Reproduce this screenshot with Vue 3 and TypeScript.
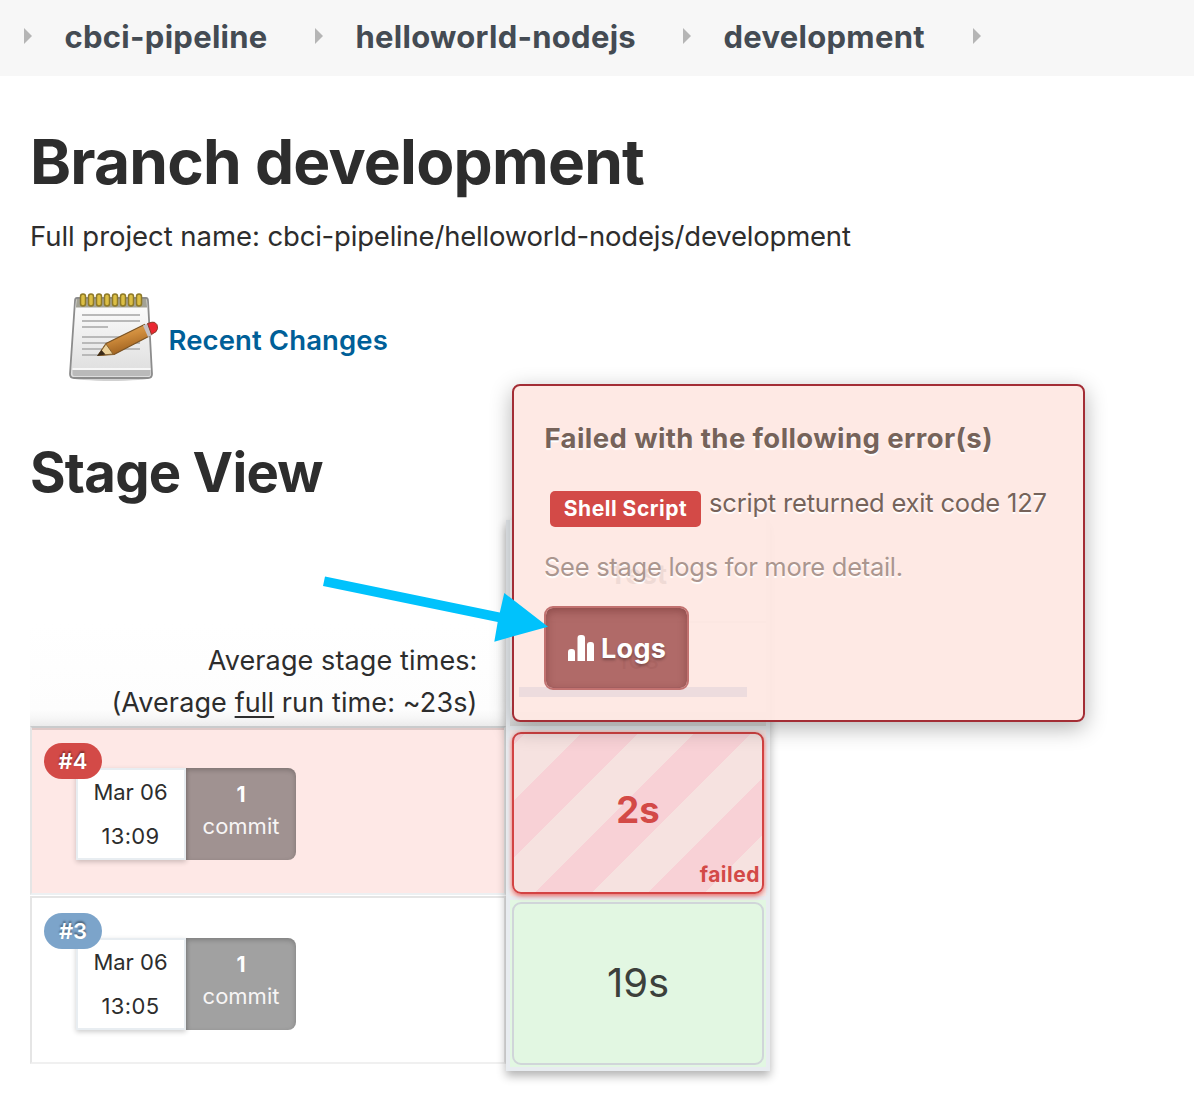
<script setup lang="ts">
interface Crumb { label: string; width: number }
interface Build { id: string; time: string; failed: boolean }

const crumbs: Crumb[] = [
  { label: 'cbci-pipeline', width: 291 },
  { label: 'helloworld-nodejs', width: 368 },
  { label: 'development', width: 290 },
]
const builds: Build[] = [
  { id: '#4', time: '13:09', failed: true },
  { id: '#3', time: '13:05', failed: false },
]
const rings = [80, 88, 96, 104, 112, 120, 128, 136]
</script>

<template>
  <div class="page">
    <nav class="crumbs">
      <i class="sep"></i>
      <div v-for="c in crumbs" :key="c.label" class="crumb" :style="{ width: c.width + 'px' }">
        <span>{{ c.label }}</span><i class="sep"></i>
      </div>
    </nav>
    <main>
      <h1>Branch development</h1>
      <p class="full"><span>Full project name: </span>cbci-pipeline/helloworld-nodejs/development</p>
      <a class="recent">
        <svg width="98" height="96" viewBox="64 290 98 96">
          <defs>
            <linearGradient id="paper" x1="0" y1="0" x2="0" y2="1"><stop offset="0" stop-color="#fff" /><stop offset="1" stop-color="#dcdcdc" /></linearGradient>
            <linearGradient id="wood" x1="0" y1="0" x2="0.4" y2="1"><stop offset="0" stop-color="#e6b062" /><stop offset=".5" stop-color="#cf8c3c" /><stop offset="1" stop-color="#9c5f1e" /></linearGradient>
          </defs>
          <ellipse cx="111" cy="378" rx="38" ry="3" fill="#000" opacity=".18" />
          <path d="M77 298h69q2 0 2 3l4 73q0 4-4 4H74q-4 0-4-4l5-73q0-3 2-3z" fill="url(#paper)" stroke="#8c8c8c" stroke-width="1.800" />
          <path d="M76.500 299h70l.5 8.500H76z" fill="#a3a295" />
          <path d="M72.500 370h78v4q0 2-2 2H74.500q-2 0-2-2z" fill="#bababa" />
          <path d="M72.500 369h78" stroke="#fff" stroke-width="1.500" />
          <path d="M82 315h58M82 321h58M82 327h26M82 337h58M82 343h58M82 349h58M82 355h22" stroke="#b9b9b9" stroke-width="1.900" />
          <rect v-for="x in rings" :key="x" :x="x + 0.5" y="294" width="5" height="12" rx="2.500" fill="#dcbf45" stroke="#8f7a28" stroke-width="1.500" />
          <path d="M98 355.500L106 343.500 144.500 324.500 149.500 336 114 354.500z" fill="url(#wood)" stroke="#7a5222" stroke-width="1.200" stroke-linejoin="round" />
          <path d="M98 355.500L106 344 113 354z" fill="#ecd29c" stroke="#8a6430" />
          <path d="M97 356l4.500-6 4 4.500z" fill="#3a2a18" />
          <path d="M143 325.500l4.500-2 5 11.500-4.500 2z" fill="#c4c0c4" />
          <path d="M147.500 323.500l4.500-1.300q3-.8 5 2.500 1.600 4-1 7l-4.500 2.700z" fill="#ea2832" stroke="#8c3a28" />
        </svg>
        <span>Recent Changes</span>
      </a>
      <h2>Stage View</h2>
      <section class="stages">
        <div class="left">
          <div class="avg"><div>Average stage times:</div><div class="second">(Average <u>full</u> run time: ~23s)</div></div>
          <div v-for="b in builds" :key="b.id" class="run" :class="{ failed: b.failed }">
            <div class="card">
              <span class="pill">{{ b.id }}</span>
              <div class="date"><span>Mar 06</span><span class="time">{{ b.time }}</span></div>
              <div class="commit"><b>1</b><span>commit</span></div>
            </div>
          </div>
        </div>
        <div class="column">
          <div class="colhead"><b>Test</b><div class="mean">10s</div><i class="bar"></i></div>
          <div class="cell bad"><div class="box"><span>2s</span><em>failed</em></div></div>
          <div class="cell good"><div class="box"><span>19s</span></div></div>
        </div>
        <aside class="popup">
          <h3>Failed with the following error(s)</h3>
          <div class="err"><span class="tag">Shell Script</span><span class="msg">script returned exit code 127</span></div>
          <p class="see">See stage logs for more detail.</p>
          <button class="logs">
            <svg width="26" height="26" viewBox="0 0 26 26" fill="#fff"><path d="M0 26V17q0-3 3-3h1q3 0 3 3v9zM9.500 26V3q0-3 3-3h1.500q3 0 3 3v23zM19 26V10q0-3 3-3h1q3 0 3 3v16z" /></svg>
            <span>Logs</span>
          </button>
        </aside>
        <svg class="arrow" width="226" height="50" viewBox="322 592 226 50"><path d="M325 576.500L499.800 612.500 504.300 593 548 626.700 494.300 641.700 497.700 622 323 586z" fill="#00c2fc" /></svg>
      </section>
    </main>
  </div>
</template>

<style>
body { margin: 0; background: #fff; }
</style>
<style scoped>
* { box-sizing: border-box; }
.page { width: 1194px; height: 1104px; overflow: hidden; position: relative; font-family: Inter, "Liberation Sans", sans-serif; color: #2d2d2d; }
.crumbs { height: 76px; padding: 0 0 3px 24px; background: #f7f7f7; display: flex; align-items: center; color: #444b53; font-size: 31px; font-weight: 700; letter-spacing: .280px; }
.crumb { display: flex; align-items: center; justify-content: space-between; padding-left: 32.500px; }
.sep { width: 0; height: 0; border: 8px solid transparent; border-left-color: #b5b5b5; border-right: 0; flex: none; margin-bottom: 1px; }
main { padding: 48px 30px 0; }
h1, h2, h3, p { margin: 0; }
h1 { font-size: 62.200px; line-height: 76px; letter-spacing: -.790px; }
.full { font-size: 27.500px; line-height: 42px; margin-top: 15px; white-space: pre; letter-spacing: -.200px; }
.full span { letter-spacing: -.050px; }
.recent { display: flex; height: 96px; margin: 33px 0 0 34px; align-items: center; color: #005f98; font-size: 27.500px; font-weight: 600; letter-spacing: .110px; }
.recent span { padding: 4px 0 0 6.500px; }
h2 { font-size: 54.400px; line-height: 60px; margin-top: 56px; letter-spacing: -.740px; }
.stages { position: relative; display: flex; margin-top: 18px; width: 740px; height: 551px; }
.left { width: 476px; }
.avg { height: 206px; padding: 120px 28.500px 0 0; text-align: right; font-size: 27px; line-height: 42px; letter-spacing: .110px; background: linear-gradient(#fff 50%, #fdfdfd 92%, #f7f7f7 96%, #ebebeb); }
u { text-underline-offset: 4px; text-decoration-thickness: 2px; }
.run { height: 168px; border: 2px solid #e5e5e5; border-bottom-color: #f0f0f0; padding: 40px 0 0 44px; }
.run.failed { background: linear-gradient(#dfc9c7 2px, #fee8e6 2px); border-top-color: #c9cbcc; height: 169px; margin-bottom: 1px; border-bottom-color: #edf0f2; }
.card { position: relative; display: flex; width: 220px; height: 92px; font-size: 22px; }
.date { width: 110px; border: 2px solid #e8edf1; background: #fff; box-shadow: 0 2px 5px rgba(0,0,0,.2); text-align: center; line-height: 44px; }
.date span { display: block; margin-left: -1px; }
.date .time { letter-spacing: .350px; }
.commit { width: 110px; background: rgba(0,0,0,.37); border-radius: 0 8px 8px 0; color: #fff; text-align: center; display: flex; flex-direction: column; line-height: 32px; padding-top: 10px; box-shadow: inset 0 2px 5px rgba(0,0,0,.22); }
.commit b { font-size: 21px; padding-top: 1px; margin-bottom: -1px; }
.commit span { color: #f7f5f5; }
.pill { position: absolute; left: -32px; top: -25px; width: 58px; height: 36px; border-radius: 18px; background: #7ca4ca; color: #fff; font-weight: 600; line-height: 36px; text-align: center; text-shadow: 0 -2px 2px rgba(0,0,0,.4); }
.failed .pill { background: #d34a47; }
.column { width: 264px; border: solid #e8ecf0; border-width: 0 4px 4px; box-shadow: 0 5px 9px rgba(0,0,0,.3); background: #e8ecf0; }
.colhead { height: 206px; background: linear-gradient(#fff, #fff 90%, #d8d8d8); text-align: center; padding-top: 33px; font-size: 27.500px; line-height: 42px; }
.mean { border-top: 2px solid #ddd; margin-top: 26px; padding-top: 16px; font-size: 27px; }
.bar { display: block; height: 10px; width: 228px; background: #104ba8; margin: 6px 0 0 9px; }
.cell { height: 166px; margin-top: 4px; padding: 2px; background: #f6e9e7; }
.cell.good { height: 167px; background: #e2f7e2; }
.box { position: relative; height: 100%; border: 2px solid #d0d5d9; border-radius: 9px; display: flex; align-items: center; justify-content: center; font-size: 40px; color: #3c403b; }
.box span { padding-bottom: 3px; }
.bad .box span { padding-bottom: 7px; }
.bad .box { border-color: #d34343; color: #d34a47; font-size: 36.500px; font-weight: 700; background: repeating-linear-gradient(-45deg, #f6e2e0 0 40px, #f8d1d6 40px 80px); box-shadow: 0 2px 5px rgba(220,50,50,.7); }
.box em { position: absolute; right: 2px; bottom: 3px; font-style: normal; font-size: 21px; line-height: 28px; letter-spacing: .500px; }
.popup { position: absolute; left: 482px; top: -136px; width: 573px; height: 338px; border: 2px solid #a32d35; border-radius: 8px; background: rgba(254,231,226,.93); box-shadow: 0 6px 22px rgba(0,0,0,.3); padding: 31px 30px; color: #76635a; text-shadow: 0 2px 1px #fff; }
h3 { font-size: 27.500px; line-height: 42px; white-space: nowrap; letter-spacing: .410px; margin-left: .500px; }
.err { display: flex; height: 36px; margin: 32px 0 0 6px; font-size: 25.500px; white-space: nowrap; letter-spacing: -.190px; }
.tag { width: 151px; height: 36px; border-radius: 5px; background: #d34a47; color: #fff; font-size: 21px; font-weight: 700; line-height: 36px; text-align: center; text-shadow: none; letter-spacing: .520px; }
.msg { margin-left: 8px; line-height: 24px; }
.see { font-size: 25.500px; line-height: 32px; margin-top: 24px; color: #ab968f; letter-spacing: -.280px; }
.logs { display: flex; align-items: center; width: 145px; height: 84px; margin-top: 23px; padding: 0 0 0 22px; border: 2px solid #c27270; border-radius: 9px; background: rgba(124,22,21,.6); background-clip: padding-box; box-shadow: inset 0 3px 8px rgba(80,20,20,.35); color: #fff; font: 700 27px Inter, sans-serif; letter-spacing: .300px; text-shadow: 0 2px 3px rgba(0,0,0,.3); }
.logs span { margin-left: 7px; }
.arrow { position: absolute; left: 292px; top: 72px; overflow: visible; }
</style>
